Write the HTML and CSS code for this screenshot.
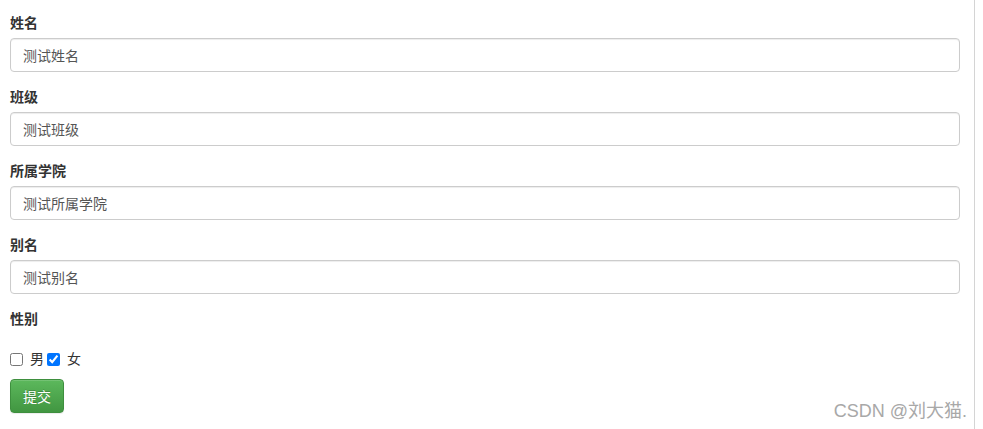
FILE: index.html
```html
<!DOCTYPE html>
<html lang="zh-CN">
<head>
    <meta charset="UTF-8">
    <meta name="viewport" content="width=device-width, initial-scale=1.0">
    <title>学生信息</title>
    <link rel="stylesheet" href="styles.css">
</head>
<body>
    <div class="page">
        <form class="student-form">
            <div class="form-group">
                <label for="name">姓名</label>
                <input type="text" id="name" class="form-control" value="测试姓名">
            </div>
            <div class="form-group">
                <label for="clazz">班级</label>
                <input type="text" id="clazz" class="form-control" value="测试班级">
            </div>
            <div class="form-group">
                <label for="college">所属学院</label>
                <input type="text" id="college" class="form-control" value="测试所属学院">
            </div>
            <div class="form-group">
                <label for="alias">别名</label>
                <input type="text" id="alias" class="form-control" value="测试别名">
            </div>
            <div class="form-group gender">
                <label>性别</label>
                <div class="check-row">
                    <input type="checkbox" id="male" class="check"><span class="check-text male">男</span>
                    <input type="checkbox" id="female" class="check" checked><span class="check-text">女</span>
                </div>
            </div>
            <button type="submit" class="btn-success">提交</button>
        </form>
    </div>
    <div class="watermark">CSDN @刘大猫.</div>
</body>
</html>
```

FILE: styles.css
```css
html, body {
    height: 100%;
}
body {
    font-family: "Liberation Sans", "Noto Sans CJK SC", sans-serif;
    font-size: 14px;
    line-height: 20px;
    color: #333;
    background-color: #fff;
    margin: 0;
    padding: 0;
}
.page {
    width: 975px;
    min-height: 100%;
    box-sizing: border-box;
    border-right: 1px solid #d4d4d4;
}
.student-form {
    width: 950px;
    padding: 13px 0 0 10px;
}
.form-group {
    margin-bottom: 15px;
}
.form-group label {
    display: block;
    margin-bottom: 5px;
    font-weight: bold;
}
.form-control {
    display: block;
    width: 100%;
    height: 34px;
    box-sizing: border-box;
    padding: 6px 12px;
    font-family: inherit;
    font-size: 14px;
    color: #555;
    background: #fff;
    border: 1px solid #ccc;
    border-radius: 4px;
    box-shadow: inset 0 1px 1px rgba(0, 0, 0, 0.075);
    margin: 0;
}
.gender {
    margin-bottom: 10px;
}
.check-row {
    display: flex;
    align-items: center;
    padding-top: 15px;
    height: 20px;
}
.check {
    width: 13px;
    height: 13px;
    margin: 0 7px 0 0;
}
.check-text {
    color: #333;
}
.check-text.male {
    margin-right: 3px;
}
.btn-success {
    display: block;
    width: 54px;
    height: 34px;
    padding: 6px 0;
    font-family: inherit;
    font-size: 14px;
    color: #fff;
    background-image: linear-gradient(to bottom, #5cb85c 0, #419641 100%);
    border: 1px solid #3e8f3e;
    border-radius: 4px;
    box-shadow: inset 0 1px 0 rgba(255, 255, 255, 0.15), 0 1px 1px rgba(0, 0, 0, 0.075);
    text-shadow: 0 -1px 0 rgba(0, 0, 0, 0.2);
    cursor: pointer;
}
.watermark {
    position: absolute;
    right: 16px;
    bottom: 8px;
    font-size: 18px;
    color: #a8a8a8;
    text-shadow: 0 0 1px rgba(255, 255, 255, 0.8);
}
```
